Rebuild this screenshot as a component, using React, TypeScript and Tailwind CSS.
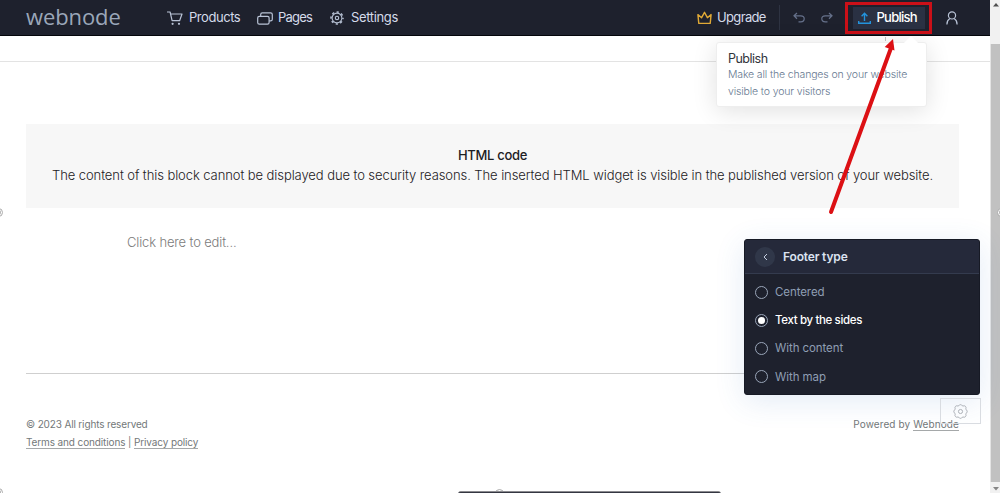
import type { ReactNode } from 'react';

const footerTypes = ['Centered', 'Text by the sides', 'With content', 'With map'];

function CartIcon() {
  return (
    <svg width="16" height="15" viewBox="0 0 16 15" fill="none" stroke="#b9c3d6" strokeWidth="1.2">
      <path d="M.5 1h2.6l2 8.7h7.5L15 3H3.6" strokeLinejoin="round" strokeLinecap="round" />
      <circle cx="5.6" cy="12.8" r="1.1" fill="#b9c3d6" stroke="none" />
      <circle cx="12" cy="12.8" r="1.1" fill="#b9c3d6" stroke="none" />
    </svg>
  );
}

function PagesIcon() {
  return (
    <svg width="16" height="13" viewBox="0 0 16 13" fill="none" stroke="#b9c3d6" strokeWidth="1.2">
      <rect x=".7" y="4.3" width="11.4" height="7.8" rx="1.6" />
      <path d="M3.7 4.2V2.4C3.7 1.4 4.3.8 5.3.8h8.3c1 0 1.7.6 1.7 1.6v4.8c0 1-.7 1.6-1.7 1.6h-1.4" />
    </svg>
  );
}

function SettingsIcon() {
  return (
    <svg width="14" height="14" viewBox="0 0 14 14" fill="none" stroke="#b9c3d6">
      <circle cx="7" cy="7" r="4.9" strokeWidth="1.1" />
      <circle cx="7" cy="7" r="6" strokeWidth="1.5" strokeDasharray="2.2 2.512" strokeDashoffset="1.1" />
      <circle cx="7" cy="7" r="1.7" strokeWidth="1.1" />
    </svg>
  );
}

function CrownIcon() {
  return (
    <svg width="15" height="14" viewBox="0 0 15 14" fill="none" stroke="#e0a936" strokeWidth="1.4">
      <path d="M1.8 12.4.9 3.6l3.7 3.1 2.9-5.4 2.9 5.4 3.7-3.1-.9 8.8Z" strokeLinejoin="round" />
    </svg>
  );
}

function UndoIcon({ flip = false }: { flip?: boolean }) {
  return (
    <svg
      className={flip ? '-scale-x-100' : ''}
      width="12"
      height="11"
      viewBox="0 0 12 11"
      fill="none"
      stroke="#66718b"
      strokeWidth="1.2"
    >
      <path d="M4 1 1 3.8 4 6.7M1 3.8h6.8c2 0 3.4 1.2 3.4 3s-1.4 3-3.4 3H5.5" />
    </svg>
  );
}

function UploadIcon() {
  return (
    <svg width="13" height="12" viewBox="0 0 13 12" fill="none" stroke="#2393dd" strokeWidth="1.4">
      <path d="M6.5 9V1.4M3.6 4.2l2.9-3 2.9 3M.7 8.9v2.3h11.6V8.9" />
    </svg>
  );
}

function UserIcon() {
  return (
    <svg width="12" height="14" viewBox="0 0 12 14" fill="none" stroke="#b9c3d6" strokeWidth="1.2">
      <circle cx="6" cy="4.4" r="3.6" />
      <path d="M.9 13.4c0-2.9 1.2-4.7 3-5.8M11.1 13.4c0-2.9-1.2-4.7-3-5.8" />
    </svg>
  );
}

function NavItem({ icon, label, className }: { icon: ReactNode; label: string; className: string }) {
  return (
    <a className={`flex items-center text-[13px] text-[#d5dbea] ${className}`}>
      {icon}
      <span>{label}</span>
    </a>
  );
}

function Header() {
  return (
    <header className="flex h-9 items-center border-b border-[#04060b] bg-[#1e212d]">
      <div className="ml-[26px] w-[141px] pb-[3px] font-['Open_Sans',sans-serif] text-[22px] leading-none font-normal tracking-[-0.1px] text-[#9ba7b9]">
        webnode
      </div>
      <NavItem icon={<CartIcon />} label="Products" className="w-[90px] gap-[6px] pt-px tracking-[-0.45px]" />
      <NavItem icon={<PagesIcon />} label="Pages" className="w-[73px] gap-[5px] pt-px tracking-[-0.8px]" />
      <NavItem icon={<SettingsIcon />} label="Settings" className="gap-[7px] pt-px tracking-[-0.35px]" />

      <div className="ml-auto flex h-full items-center">
        <NavItem icon={<CrownIcon />} label="Upgrade" className="w-[82px] gap-[5px] pt-px tracking-[-0.65px]" />
        <div className="h-[25px] w-px bg-[#2e3342]" />
        <div className="ml-[13px] flex gap-[16px]">
          <UndoIcon />
          <UndoIcon flip />
        </div>
        <div className="mt-px ml-[12px] flex h-8 w-[87px] items-center justify-center border-[3px] border-[#cb1018]">
          <button className="flex h-[22px] w-[72px] items-center gap-[6px] bg-[#2a3143] pl-[5px] text-[13px] font-medium tracking-[-0.75px] text-white">
            <UploadIcon />
            Publish
          </button>
        </div>
        <div className="mr-[32px] ml-[14px]">
          <UserIcon />
        </div>
      </div>
    </header>
  );
}

function PublishTooltip() {
  return (
    <div className="absolute top-[42px] left-[716px] h-[65px] w-[211px] rounded-[3px] border border-[#eeeeee] bg-white pt-[7px] pl-[11px] shadow-[0_4px_24px_rgba(0,0,0,0.12)]">
      <div className="absolute -top-[5px] left-[189px] h-2.5 w-2.5 rotate-45 bg-white" />
      <p className="text-[12.5px] leading-[17px] tracking-[-0.5px] text-[#30343b]">Publish</p>
      <p className="text-[10.5px] leading-[16.5px] font-light tracking-[-0.14px] whitespace-nowrap text-[#66788f]">
        Make all the changes on your website
        <br />
        visible to your visitors
      </p>
    </div>
  );
}

function FooterTypePanel({ selected }: { selected: string }) {
  return (
    <div className="absolute top-[239px] left-[744px] h-[156px] w-[236px] overflow-hidden rounded-[3px] border border-[#171a25] bg-[#1e212d] shadow-[0_6px_30px_rgba(60,110,190,0.14)]">
      <div className="flex h-[34px] items-center gap-2 border-b border-[#343b4e] bg-[#25293a] pl-[10px]">
        <div className="flex h-5 w-5 items-center justify-center rounded-full bg-[#303749]">
          <svg width="5" height="8" viewBox="0 0 5 8" fill="none" stroke="#c4cee0">
            <path d="M4 1 1 4l3 3" />
          </svg>
        </div>
        <span className="text-[12px] font-semibold tracking-[-0.17px] text-[#dbe2f0]">Footer type</span>
      </div>
      <ul className="pt-1">
        {footerTypes.map((type) => {
          const active = type === selected;
          return (
            <li
              key={type}
              className={`flex h-[28.2px] items-center gap-[7px] pl-[10px] text-[11.5px] ${
                active ? 'font-medium tracking-[-0.36px] text-white' : 'tracking-[-0.08px] text-[#8f9eb3]'
              }`}
            >
              <span className="flex h-[13px] w-[13px] items-center justify-center rounded-full border border-[#9aa6b9]">
                {active && <span className="h-[7px] w-[7px] rounded-full bg-white" />}
              </span>
              <span className="pt-px">{type}</span>
            </li>
          );
        })}
      </ul>
    </div>
  );
}

function FooterSettingsButton() {
  return (
    <div className="absolute top-[398px] left-[940px] flex h-[26px] w-[41px] items-center justify-center border border-[#d9dce1]">
      <svg width="15" height="15" viewBox="0 0 16 16" fill="none" stroke="#a9adb3">
        <path d="M6.2 1.8a2 2 0 0 1 3.6 0l.9.4a2.1 2.1 0 0 1 3 2.7v.9a2.4 2.4 0 0 1 0 4.4v.9a2.1 2.1 0 0 1-3 2.7l-.9.4a2 2 0 0 1-3.6 0l-.9-.4a2.1 2.1 0 0 1-3-2.7v-.9a2.4 2.4 0 0 1 0-4.4v-.9a2.1 2.1 0 0 1 3-2.7Z" />
        <circle cx="8" cy="8" r="2.2" />
      </svg>
    </div>
  );
}

function Scrollbar() {
  return (
    <div className="flex h-full w-[10px] shrink-0 flex-col items-center bg-[#f1f1f1]">
      <div className="flex h-[44px] w-full justify-end pt-[3px] pr-px">
        <svg width="6" height="4" viewBox="0 0 6 4" fill="#505050">
          <path d="M0 3.5 3 0l3 3.5Z" />
        </svg>
      </div>
      <div className="w-full flex-1 border-l border-[#e4e4e4] bg-[#c1c1c1]" />
      <div className="flex h-[11px] w-full justify-end pt-[5px] pr-px">
        <svg width="6" height="4" viewBox="0 0 6 4" fill="#858585">
          <path d="M0 0h6L3 3.5Z" />
        </svg>
      </div>
    </div>
  );
}

function Arrow() {
  return (
    <svg className="absolute top-0 left-0" width="1000" height="230" fill="none">
      <path d="M831 212 891 48" stroke="#dc1014" strokeWidth="4" strokeLinecap="round" />
      <path d="m893 39 1.5 11.5-9.8-3.5Z" fill="#dc1014" />
    </svg>
  );
}

// Resize handle at the edge of the editing area
function Handle({ className }: { className: string }) {
  return (
    <div className={`absolute h-[9px] w-[9px] rounded-full border border-[#aaaaaa] bg-white p-px ${className}`}>
      <div className="h-full w-full rounded-full bg-[#b5b5b5]" />
    </div>
  );
}

export default function App() {
  return (
    <div className="relative flex h-[493px] w-[1000px] overflow-hidden bg-white font-['Inter',sans-serif]">
      <div className="flex min-w-0 flex-1 flex-col">
        <Header />
        <div className="h-[26px] shrink-0 border-b border-[#e3e3e3]" />
        <main className="mx-[26px] mr-[31px] mt-[62px] flex flex-1 flex-col">
          <section className="h-[84px] bg-[#f7f7f7] pt-[21px] text-center text-[13px] leading-5 whitespace-nowrap text-[#1c2023]">
            <p className="font-medium tracking-[-0.3px]">HTML code</p>
            <p className="font-light tracking-[-0.08px]">
              The content of this block cannot be displayed due to security reasons. The inserted HTML widget is
              visible in the published version of your website.
            </p>
          </section>
          <p className="mt-6 ml-[101px] text-[13px] leading-5 font-light tracking-[-0.15px] text-[#7b7b7b]">
            Click here to edit...
          </p>
          <footer className="mt-[121px] flex justify-between border-t border-[#cfcfcf] pt-[41px] text-[10px] leading-[18px] text-[#737879]">
            <div>
              <p className="tracking-[-0.15px]">© 2023 All rights reserved</p>
              <p className="tracking-[-0.12px]">
                <a className="border-b border-[#a5a8a9]">Terms and conditions</a> |{' '}
                <a className="border-b border-[#a5a8a9]">Privacy policy</a>
              </p>
            </div>
            <p className="tracking-[0.1px]">
              Powered by <a className="border-b border-[#a5a8a9]">Webnode</a>
            </p>
          </footer>
        </main>
      </div>
      <Scrollbar />

      <PublishTooltip />
      <FooterTypePanel selected="Text by the sides" />
      <FooterSettingsButton />
      <Handle className="top-[208px] -left-[6px]" />
      <Handle className="top-[208px] left-[997px]" />
      <Handle className="top-[488px] -left-[6px]" />
      <Handle className="top-[489px] left-[495px]" />
      <div className="absolute top-[491px] left-[458px] h-[3px] w-[263px] rounded-t-sm border-t border-[#8b8b8f] bg-[#343641]" />
      <div className="absolute top-[37px] left-[885px] h-1 w-px bg-[#bcbcbc]" />
      <Arrow />
    </div>
  );
}
